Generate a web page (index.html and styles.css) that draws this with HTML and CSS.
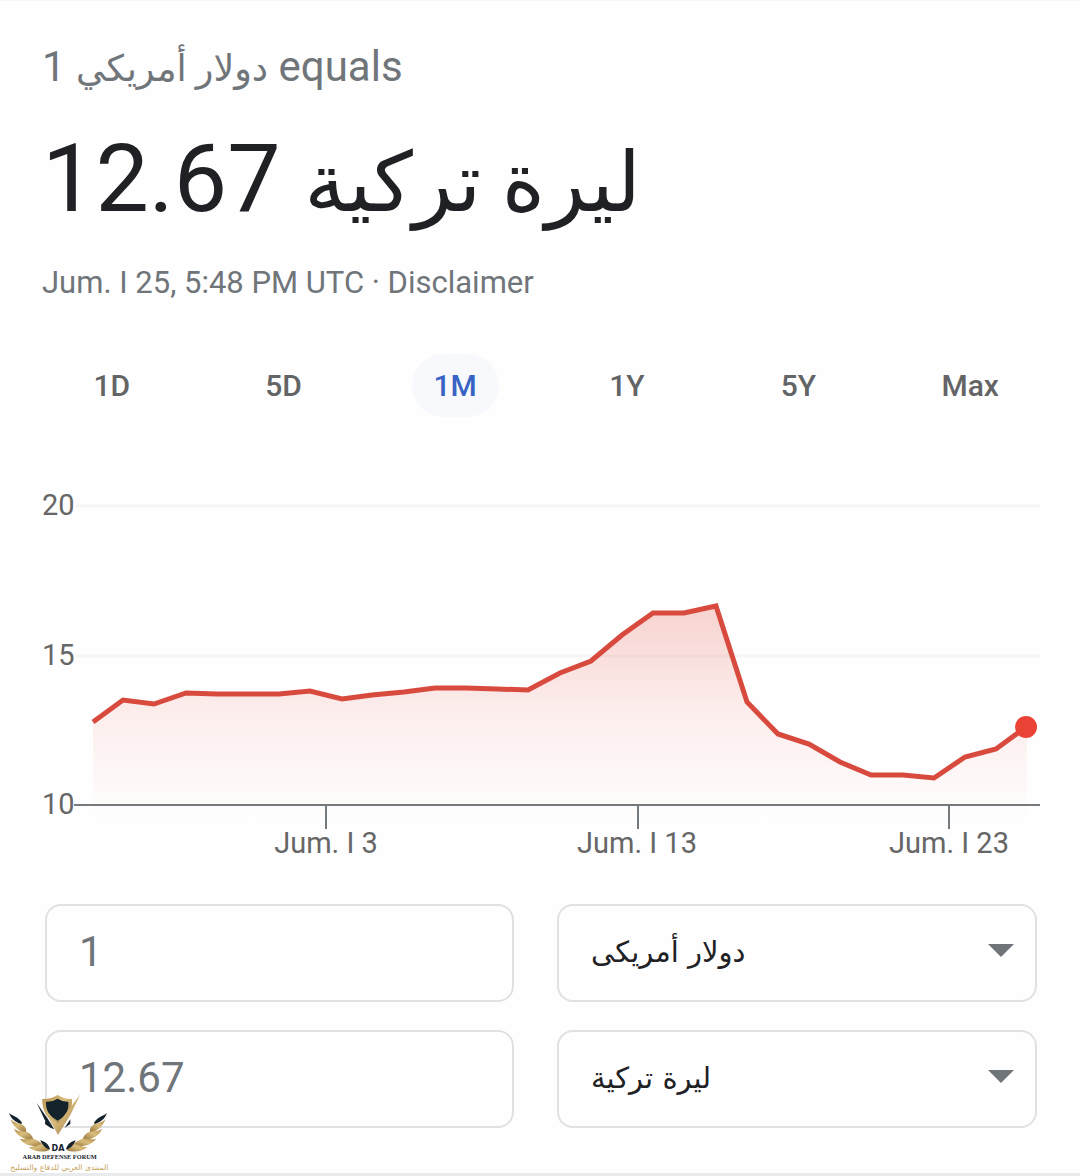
FILE: index.html
```html
<!DOCTYPE html>
<html lang="en">
<head>
    <meta charset="UTF-8">
    <meta name="viewport" content="width=device-width, initial-scale=1.0">
    <title>Currency Converter</title>
    <link rel="stylesheet" href="styles.css">
</head>
<body>
    <main class="converter">
        <header class="rate">
            <p class="rate-from">1 <span class="arabic" lang="ar">دولار أمريكي</span> equals</p>
            <h1 class="rate-to">12.67 <span class="arabic" lang="ar">ليرة تركية</span></h1>
            <p class="rate-date">Jum. I 25, 5:48 PM UTC · <a href="#disclaimer">Disclaimer</a></p>
        </header>

        <nav class="ranges" aria-label="Range">
            <button type="button">1D</button>
            <button type="button">5D</button>
            <button type="button" class="active">1M</button>
            <button type="button">1Y</button>
            <button type="button">5Y</button>
            <button type="button">Max</button>
        </nav>

        <svg class="chart" viewBox="0 0 998 380" role="img" aria-label="Exchange rate, 1 month">
            <defs>
                <linearGradient id="area" gradientUnits="userSpaceOnUse" x1="0" y1="122" x2="0" y2="336">
                    <stop offset="0" stop-color="#e04a3c" stop-opacity="0.24"/>
                    <stop offset="0.5" stop-color="#e6483a" stop-opacity="0.09"/>
                    <stop offset="1" stop-color="#ea4335" stop-opacity="0"/>
                </linearGradient>
            </defs>

            <!-- Grid -->
            <path class="grid" d="M34 22H998M34 172H998"/>
            <path class="area" d="M51 238L81 216L112 220L144 209L175 210H237L268 207L300 215L330 211L362 208L393 204H424L455 205L486 206L518 189L549 177L580 151L611 129H642L674 122L705 218L736 250L767 260L798 278L829 291H861L892 294L923 273L954 265L985 243V336H51Z"/>

            <!-- Axis -->
            <path class="axis" d="M32 321H998M284 321V345M596 321V345M907 321V345"/>
            <path class="line" d="M51 238L81 216L112 220L144 209L175 210H237L268 207L300 215L330 211L362 208L393 204H424L455 205L486 206L518 189L549 177L580 151L611 129H642L674 122L705 218L736 250L767 260L798 278L829 291H861L892 294L923 273L954 265L984 243"/>
            <circle class="dot" cx="984" cy="243" r="11"/>

            <g class="labels">
                <text x="0" y="31">20</text>
                <text x="0" y="181">15</text>
                <text x="0" y="330">10</text>
                <g text-anchor="middle">
                    <text x="284" y="369">Jum. I 3</text>
                    <text x="595" y="369">Jum. I 13</text>
                    <text x="907" y="369">Jum. I 23</text>
                </g>
            </g>
        </svg>

        <form class="fields">
            <input type="text" value="1" inputmode="decimal" aria-label="Amount from">
            <div class="select">
                <select aria-label="Currency from">
                    <option>دولار أمريكى</option>
                </select>
            </div>
            <input type="text" value="12.67" inputmode="decimal" aria-label="Amount to">
            <div class="select">
                <select aria-label="Currency to">
                    <option>ليرة تركية</option>
                </select>
            </div>
        </form>

        <!-- Forum badge -->
        <svg class="badge" viewBox="0 0 390 288" role="img" aria-label="Arab Defense Forum">
            <defs>
                <linearGradient id="gold" x1="0" y1="0" x2="1" y2="1">
                    <stop offset="0" stop-color="#b08b4a"/>
                    <stop offset="0.45" stop-color="#d9bd7c"/>
                    <stop offset="1" stop-color="#94713b"/>
                </linearGradient>
                <g id="wing">
                    <path class="navy" d="M27 99C37 108 55 109 67 130L61 132C49 126 34 119 27 99Z"/>
                    <path class="gold" d="M32 117C43 132 62 126 73 139C79 146 79 152 78 159C61 156 39 142 32 117Z"/>
                    <path class="gold" d="M42 146C58 159 76 149 88 160C96 167 100 173 99 181C76 180 50 169 42 146Z"/>
                    <path class="gold" d="M60 176C80 182 93 171 110 180C121 186 127 190 128 197C102 202 71 195 60 176Z"/>
                    <path class="gold" d="M86 201C104 203 111 192 125 192C140 192 145 200 149 210C129 219 101 215 86 201Z"/>
                    <path class="navy" d="M121 181C134 184 147 193 150 208C138 208 125 193 121 181Z"/>
                </g>
            </defs>
            <use href="#wing"/>
            <use href="#wing" transform="matrix(-1 0 0 1 348 0)"/>
            <path class="navy" d="M110 68L143 116L163 148L151 143L134 119ZM136 118L151 143L135 132ZM211 118V132L194 143Z"/>
            <path class="gold" d="M127 57Q153 58 173 45Q193 58 216 57C218 91 208 113 173 133C138 113 126 91 127 57Z"/>
            <path class="navy" d="M138 65Q158 66 173 56Q188 66 205 65C207 91 199 107 173 122C147 107 137 91 138 65Z"/>
            <path class="gold" d="M139 100L174 131L241 43L211 105L174 165Z"/>
            <text class="badge-mono" x="174" y="213">DA</text>
            <text class="badge-name" x="179" y="238">ARAB DEFENSE FORUM</text>
            <text class="badge-arabic" x="178" y="270" lang="ar">المنتدى العربي للدفاع والتسليح</text>
        </svg>
    </main>
</body>
</html>
```

FILE: styles.css
```css
* {
    margin: 0;
    padding: 0;
    box-sizing: border-box;
}

body {
    font-family: Roboto, "DejaVu Sans", sans-serif;
    background-color: #fefefe;
    color: #202124;
}

.converter {
    position: relative;
    padding-bottom: 45px;
    border-top: 1px solid #f5f6f7;
    border-bottom: 3px solid #e8eaeb;
}

/* Heading */
.rate {
    padding: 40px 42px 0;
    color: #70757a;
}

.rate-from {
    font-size: 42px;
    line-height: 52px;
}

.rate-to {
    margin-top: 22px;
    font-size: 95px;
    font-weight: 400;
    line-height: 124px;
    color: #202124;
}

.rate-date {
    margin-top: 20px;
    font-size: 31px;
    line-height: 36px;
}

.rate-date a {
    color: inherit;
    text-decoration: none;
}

.arabic {
    font-size: 87%;
}

/* Range tabs */
.ranges {
    display: grid;
    grid-template-columns: repeat(6, 1fr);
    justify-items: center;
    padding: 53px 24px 0 26px;
}

.ranges button {
    padding: 0 22px;
    border: 0;
    border-radius: 32px;
    background: none;
    font: 500 30px/63px Roboto, sans-serif;
    color: #636466;
}

.ranges .active {
    background-color: #f7f9fc;
    color: #3763c4;
}

/* Chart */
.chart {
    display: block;
    width: 100%;
    margin-top: 67px;
    padding: 0 40px 0 42px;
}

.grid {
    stroke: #f5f5f5;
    stroke-width: 3;
}

.area {
    fill: url(#area);
}

.axis {
    fill: none;
    stroke: #757a7f;
    stroke-width: 2;
}

.line {
    fill: none;
    stroke: #d84a3e;
    stroke-width: 5;
}

.dot {
    fill: #ea4335;
}

.labels {
    font-size: 29px;
    fill: #666;
}

/* Converter fields */
.fields {
    display: grid;
    grid-template-columns: 469fr 480fr;
    gap: 28px 43px;
    padding: 40px 43px 0 45px;
}

.fields input,
.fields select {
    width: 100%;
    height: 98px;
    border: 2px solid #dfe1e3;
    border-radius: 16px;
    background-color: #fefefe;
    padding: 0 32px 3px;
    font-family: inherit;
}

.fields input {
    font-size: 42px;
    color: #70757a;
}

.fields select {
    appearance: none;
    font-family: "DejaVu Sans", sans-serif;
    font-size: 29px;
    line-height: 48px;
    color: #202124;
}

.select {
    position: relative;
}

.select::after {
    content: "";
    position: absolute;
    top: 40px;
    right: 23px;
    border: 13px solid transparent;
    border-top-color: #70757a;
    border-bottom: 0;
    pointer-events: none;
}

/* Forum badge */
.badge {
    position: absolute;
    left: 0;
    bottom: -3px;
    width: 130px;
    height: 96px;
    text-anchor: middle;
}

.navy {
    fill: #14222c;
}

.gold {
    fill: url(#gold);
}

.badge-mono {
    font: 700 24px "DejaVu Sans", sans-serif;
    fill: #14222c;
}

.badge-name {
    font: 700 19px "Liberation Serif", serif;
    fill: #14222c;
}

.badge-arabic {
    font: 23px "DejaVu Sans", sans-serif;
    fill: #c9a55c;
}
```
